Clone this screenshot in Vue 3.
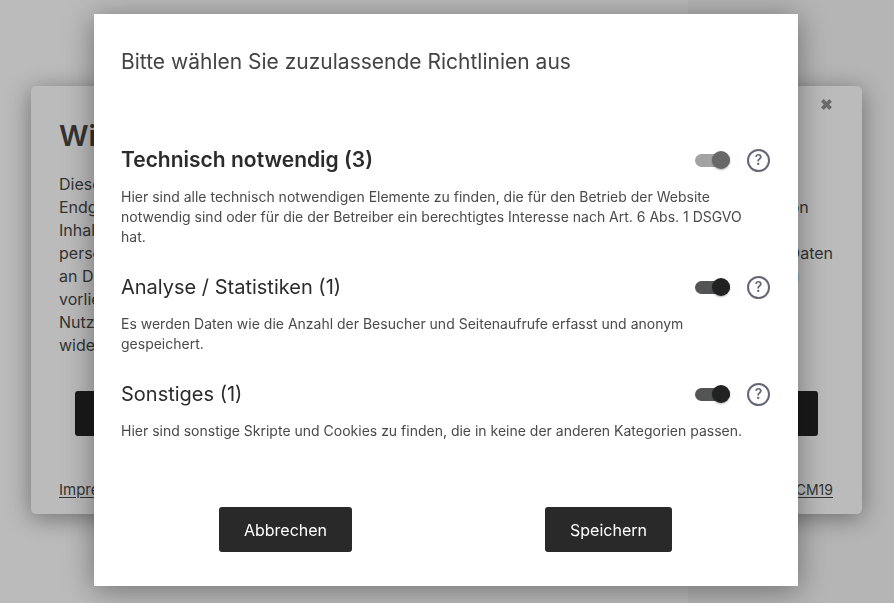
<script setup>
import { ref } from 'vue'

const lines = [
  { start: 'Diese', end: '' },
  { start: 'Endge', end: 'von' },
  { start: 'Inhalt', end: '' },
  { start: 'perso', end: 'Daten', flush: true },
  { start: 'an Dr', end: 'zu' },
  { start: 'vorlieg', end: '' },
  { start: 'Nutzu', end: '' },
  { start: 'wider', end: '' },
]

const groups = ref([
  {
    id: 'technical',
    title: 'Technisch notwendig (3)',
    text: 'Hier sind alle technisch notwendigen Elemente zu finden, die für den Betrieb der Website notwendig sind oder für die der Betreiber ein berechtigtes Interesse nach Art. 6 Abs. 1 DSGVO hat.',
    required: true,
    on: true,
  },
  {
    id: 'statistics',
    title: 'Analyse / Statistiken (1)',
    text: 'Es werden Daten wie die Anzahl der Besucher und Seitenaufrufe erfasst und anonym gespeichert.',
    required: false,
    on: true,
  },
  {
    id: 'other',
    title: 'Sonstiges (1)',
    text: 'Hier sind sonstige Skripte und Cookies zu finden, die in keine der anderen Kategorien passen.',
    required: false,
    on: true,
  },
])
</script>

<template>
  <div class="page">
    <section class="banner">
      <div class="banner-tools">
        <svg class="caret" viewBox="0 0 10 6"><path d="M1 1h8L5 5z" /></svg>
        <button class="close" type="button">
          <svg viewBox="0 0 12 12"><path d="M2.2 2.2l7.6 7.6M9.8 2.2L2.2 9.8" /></svg>
        </button>
      </div>
      <h1>Wir</h1>
      <div class="banner-text">
        <p v-for="line in lines" :key="line.start">
          <span>{{ line.start }}</span>
          <span class="end" :class="{ flush: line.flush }">{{ line.end }}</span>
        </p>
      </div>
      <div class="banner-bar"></div>
      <footer>
        <a href="#">Impre</a>
        <a class="credit" href="#">CCM19</a>
      </footer>
    </section>

    <div class="overlay">
      <form class="dialog" @submit.prevent>
        <h2>Bitte wählen Sie zuzulassende Richtlinien aus</h2>
        <div class="groups">
          <section v-for="group in groups" :key="group.id">
            <div class="group-head">
              <label :for="group.id" :class="{ strong: group.required }">{{ group.title }}</label>
              <input :id="group.id" v-model="group.on" class="switch" type="checkbox" :disabled="group.required" />
              <button class="help" type="button">?</button>
            </div>
            <p>{{ group.text }}</p>
          </section>
        </div>
        <div class="actions">
          <button type="button">Abbrechen</button>
          <button type="submit">Speichern</button>
        </div>
      </form>
    </div>
  </div>
</template>

<style>
body {
  margin: 0;
}
</style>

<style scoped>
* {
  box-sizing: border-box;
}

.page {
  min-height: 100vh;
  padding: 86px 32px 88px 31px;
  background: linear-gradient(90deg, #bbb 77%, #b5b5b5 77%);
  font-family: Inter, "Liberation Sans", sans-serif;
  color: #333;
}

h1,
h2,
p {
  margin: 0;
}

button {
  font-family: inherit;
  border: 0;
  padding: 0;
  cursor: pointer;
}

.banner {
  padding: 11px 29px 14px 28px;
  border-radius: 5px;
  background: #bbb;
  box-shadow: 0 4px 24px rgba(0, 0, 0, 0.4);
}

.banner-tools {
  display: flex;
  justify-content: flex-end;
  align-items: center;
  gap: 22px;
  height: 14px;
}

.caret {
  width: 10px;
  height: 6px;
  fill: #777;
}

.close {
  display: flex;
  background: none;
}

.close svg {
  width: 13px;
  height: 13px;
  fill: none;
  stroke: #6b6b6b;
  stroke-width: 3.4;
}

h1 {
  margin-top: 9px;
  font-size: 29px;
  line-height: 32px;
  font-weight: 600;
}

.banner-text {
  margin-top: 21px;
  font-size: 16px;
  line-height: 23px;
}

.banner-text p {
  display: flex;
  justify-content: space-between;
}

.end {
  width: 52px;
}

.flush {
  text-align: right;
}

.banner-bar {
  height: 45px;
  margin: 34px 15px 0 16px;
  border-radius: 3px;
  background: #1a1a1a;
}

footer {
  display: flex;
  justify-content: space-between;
  align-items: baseline;
  margin-top: 43px;
  line-height: 21px;
}

footer a {
  font-size: 15px;
  color: #333;
  text-underline-offset: 2px;
}

footer .credit {
  font-size: 14px;
}

.overlay {
  position: fixed;
  inset: 0;
  padding: 14px 96px 17px 94px;
}

.dialog {
  padding: 34px 28px 34px 27px;
  background: #fff;
  box-shadow: 0 4px 28px rgba(0, 0, 0, 0.4);
}

h2 {
  font-size: 21px;
  line-height: 28px;
  font-weight: 400;
  color: #444;
}

.groups {
  display: grid;
  gap: 28px;
  margin-top: 72px;
}

.group-head {
  display: flex;
  align-items: center;
  height: 24px;
}

.group-head label {
  flex: 1;
  font-size: 20px;
  line-height: 24px;
  color: #2b2b2b;
}

.group-head .strong {
  font-size: 21px;
  font-weight: 600;
}

.groups p {
  margin-top: 15px;
  font-size: 14px;
  line-height: 20px;
  color: #4a4a4a;
}

.switch {
  appearance: none;
  display: flex;
  justify-content: flex-end;
  align-items: center;
  width: 35px;
  height: 13px;
  margin: 0 17px 0 0;
  border-radius: 7px;
  background: #525456;
}

.switch::before {
  content: "";
  width: 18px;
  height: 18px;
  flex: none;
  border-radius: 50%;
  background: #212322;
  box-shadow: 0 1px 2px rgba(0, 0, 0, 0.3);
}

.switch:not(:checked) {
  justify-content: flex-start;
}

.switch:disabled {
  background: #a3a3a3;
}

.switch:disabled::before {
  background: #686868;
}

.help {
  width: 23px;
  height: 23px;
  border: 2px solid #656777;
  border-radius: 50%;
  background: none;
  font-size: 14px;
  line-height: 18px;
  font-weight: 600;
  color: #656777;
}

.actions {
  display: grid;
  grid-template-columns: 1fr 1fr;
  justify-items: center;
  margin-top: 66px;
  padding-left: 3px;
}

.actions button {
  height: 45px;
  padding: 0 25px;
  border-radius: 3px;
  background: #292929;
  font-size: 16px;
  color: #fff;
}
</style>
